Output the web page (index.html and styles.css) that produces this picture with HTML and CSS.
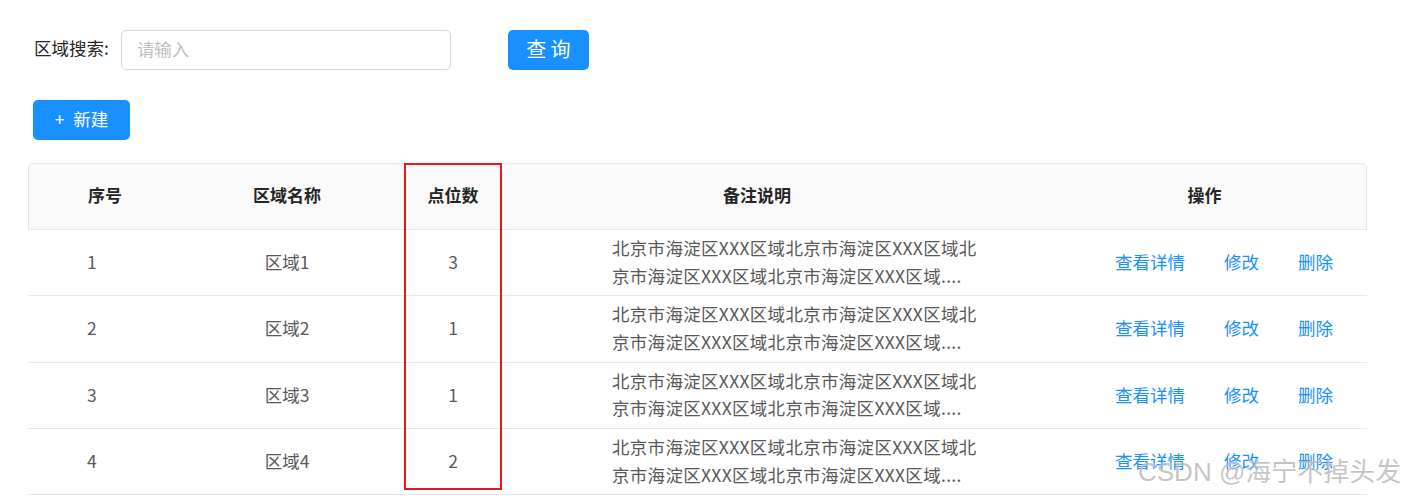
FILE: index.html
```html
<!DOCTYPE html>
<html lang="zh-CN">
<head>
    <meta charset="UTF-8">
    <meta name="viewport" content="width=device-width, initial-scale=1.0">
    <title>区域管理</title>
    <link rel="stylesheet" href="styles.css">
</head>
<body>
    <div class="page">
        <!-- 搜索栏 -->
        <div class="search-bar">
            <label class="search-label" for="area">区域搜索:</label>
            <input class="search-input" id="area" type="text" placeholder="请输入">
            <button class="btn btn-query">查 询</button>
        </div>

        <div class="toolbar">
            <button class="btn btn-add"><span class="plus">+</span>新建</button>
        </div>

        <!-- 区域列表 -->
        <div class="table-wrap">
            <table class="area-table">
                <colgroup>
                    <col style="width: 142px">
                    <col style="width: 234px">
                    <col style="width: 98px">
                    <col style="width: 510px">
                    <col>
                </colgroup>
                <thead>
                    <tr>
                        <th class="col-index">序号</th>
                        <th>区域名称</th>
                        <th>点位数</th>
                        <th>备注说明</th>
                        <th class="col-ops">操作</th>
                    </tr>
                </thead>
                <tbody>
                    <tr>
                        <td class="col-index">1</td>
                        <td>区域1</td>
                        <td>3</td>
                        <td class="col-note"><div class="note">北京市海淀区XXX区域北京市海淀区XXX区域北京市海淀区XXX区域北京市海淀区XXX区域....</div></td>
                        <td class="col-ops"><a href="#">查看详情</a><a href="#">修改</a><a href="#">删除</a></td>
                    </tr>
                    <tr>
                        <td class="col-index">2</td>
                        <td>区域2</td>
                        <td>1</td>
                        <td class="col-note"><div class="note">北京市海淀区XXX区域北京市海淀区XXX区域北京市海淀区XXX区域北京市海淀区XXX区域....</div></td>
                        <td class="col-ops"><a href="#">查看详情</a><a href="#">修改</a><a href="#">删除</a></td>
                    </tr>
                    <tr>
                        <td class="col-index">3</td>
                        <td>区域3</td>
                        <td>1</td>
                        <td class="col-note"><div class="note">北京市海淀区XXX区域北京市海淀区XXX区域北京市海淀区XXX区域北京市海淀区XXX区域....</div></td>
                        <td class="col-ops"><a href="#">查看详情</a><a href="#">修改</a><a href="#">删除</a></td>
                    </tr>
                    <tr>
                        <td class="col-index">4</td>
                        <td>区域4</td>
                        <td>2</td>
                        <td class="col-note"><div class="note">北京市海淀区XXX区域北京市海淀区XXX区域北京市海淀区XXX区域北京市海淀区XXX区域....</div></td>
                        <td class="col-ops"><a href="#">查看详情</a><a href="#">修改</a><a href="#">删除</a></td>
                    </tr>
                </tbody>
            </table>
            <!-- 标注框 -->
            <div class="highlight-box"></div>
        </div>
    </div>

    <div class="watermark">CSDN @海宁不掉头发</div>
</body>
</html>
```

FILE: styles.css
```css
* {
    margin: 0;
    padding: 0;
    box-sizing: border-box;
}

:root {
    --primary: #1890ff;
    --border: #e8e8e8;
    --text: #595959;
    --title: #262626;
}

body {
    background: #ffffff;
    font-family: "Microsoft YaHei", "Noto Sans CJK SC", sans-serif;
    font-size: 17.5px;
    color: var(--text);
    width: 1408px;
    height: 496px;
    overflow: hidden;
    position: relative;
}

.page {
    padding: 30px 41px 0 28px;
}

/* 搜索栏 */
.search-bar {
    display: flex;
    align-items: center;
    height: 40px;
    padding-left: 6px;
}

.search-label {
    color: var(--title);
    font-size: 17.5px;
    margin-right: 12px;
    padding-bottom: 5px;
}

.search-input {
    width: 330px;
    height: 40px;
    border: 1px solid #d9d9d9;
    border-radius: 5px;
    padding: 0 15px 4px;
    font-family: inherit;
    font-size: 17.5px;
    color: var(--text);
    outline: none;
}

.search-input::placeholder {
    color: #bfbfbf;
}

.btn {
    height: 40px;
    border: none;
    border-radius: 5px;
    background: var(--primary);
    color: #ffffff;
    font-family: inherit;
    padding-bottom: 4px;
    cursor: pointer;
}

.btn-query {
    width: 81px;
    margin-left: 57px;
    font-size: 20px;
}

.toolbar {
    margin-top: 30px;
    padding-left: 5px;
}

.btn-add {
    width: 97px;
    font-size: 17.5px;
}

.btn-add .plus {
    margin-right: 9px;
}

/* 表格 */
.table-wrap {
    position: relative;
    margin-top: 23px;
}

.area-table {
    width: 1339px;
    table-layout: fixed;
    border-collapse: separate;
    border-spacing: 0;
}

.area-table th {
    height: 67px;
    padding-bottom: 4px;
    background: #fafafa;
    color: var(--title);
    font-weight: bold;
    font-size: 17px;
    text-align: center;
    border-top: 1px solid var(--border);
    border-bottom: 1px solid var(--border);
}

.area-table th:first-child {
    border-left: 1px solid var(--border);
    border-top-left-radius: 5px;
}

.area-table th:last-child {
    border-right: 1px solid var(--border);
    border-top-right-radius: 5px;
}

.area-table td {
    height: 66.3px;
    padding-bottom: 2px;
    text-align: center;
    vertical-align: middle;
    border-bottom: 1px solid var(--border);
}

.area-table .col-index {
    text-align: left;
    padding-left: 59px;
}

.area-table th.col-ops {
    padding-left: 31px;
}

.area-table td.col-note {
    text-align: left;
    padding-left: 110px;
}

.note {
    width: 372px;
    line-height: 27.5px;
    letter-spacing: 0.3px;
    word-break: break-all;
}

.area-table td.col-ops {
    text-align: left;
    padding-left: 103px;
}

.col-ops a {
    color: var(--primary);
    text-decoration: none;
    margin-right: 39px;
}

.col-ops a:last-child {
    margin-right: 0;
}

.highlight-box {
    position: absolute;
    left: 376px;
    top: 0;
    width: 98px;
    height: 327px;
    border: 2px solid #e5171f;
    pointer-events: none;
}

.watermark {
    position: absolute;
    left: 1138px;
    top: 451px;
    font-family: "Liberation Sans", "Noto Sans CJK SC", sans-serif;
    font-size: 26px;
    color: rgba(140, 140, 140, 0.5);
    text-shadow: 0 0 1px rgba(255, 255, 255, 0.8);
    white-space: nowrap;
    pointer-events: none;
}
```
